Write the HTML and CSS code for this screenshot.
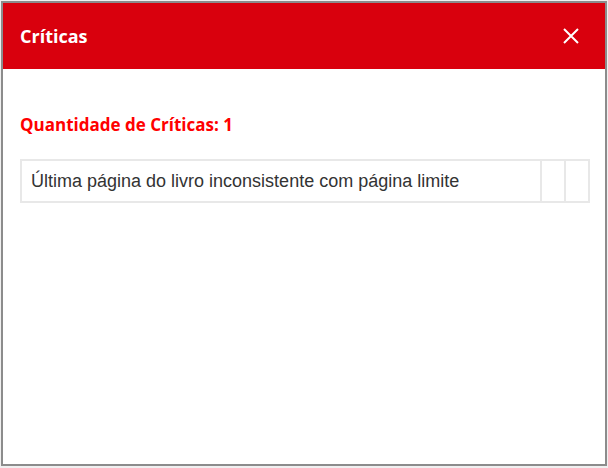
FILE: index.html
```html
<!DOCTYPE html>
<html lang="pt-BR">
<head>
    <meta charset="UTF-8">
    <meta name="viewport" content="width=device-width, initial-scale=1.0">
    <title>Críticas</title>
    <link rel="stylesheet" href="styles.css">
</head>
<body>
    <div class="modal">
        <div class="modal-header">
            <h2>Críticas</h2>
            <button class="close-btn" title="Fechar">
                <svg width="16" height="16" viewBox="0 0 16 16">
                    <path d="M1 1 L15 15 M15 1 L1 15" stroke="#fff" stroke-width="2" fill="none"/>
                </svg>
            </button>
        </div>

        <div class="modal-body">
            <div class="count">Quantidade de Críticas: 1</div>

            <table class="criticas">
                <tr>
                    <td class="msg">Última página do livro inconsistente com página limite</td>
                    <td class="action"></td>
                    <td class="action"></td>
                </tr>
            </table>
        </div>
    </div>
</body>
</html>
```

FILE: styles.css
```css
* {
    margin: 0;
    padding: 0;
    box-sizing: border-box;
}

body {
    background: #f0f0f0;
    padding: 1px;
    font-family: 'Open Sans', 'Segoe UI', sans-serif;
}

.modal {
    width: 606px;
    height: 465px;
    background: white;
    border: 2px solid #8c8c8c;
    display: flex;
    flex-direction: column;
}

.modal-header {
    background: #d9000d;
    height: 66px;
    display: flex;
    align-items: center;
    justify-content: space-between;
    padding: 0 26px 1px 17px;
}

.modal-header h2 {
    color: white;
    font-size: 18px;
    font-weight: 700;
}

.close-btn {
    background: none;
    border: none;
    width: 16px;
    height: 16px;
    display: flex;
    cursor: pointer;
}

.modal-body {
    padding: 44px 15px 0 17px;
}

.count {
    color: #ff0000;
    font-size: 17px;
    font-weight: 700;
    line-height: 24px;
}

.criticas {
    margin-top: 22px;
    width: 100%;
    border-collapse: collapse;
    font-family: 'Liberation Sans', Arial, sans-serif;
}

.criticas td {
    border: 2px solid #e8e8e8;
    height: 42px;
}

.criticas .msg {
    padding: 0 9px;
    font-size: 18px;
    color: #333;
}

.criticas .action {
    width: 24px;
}
```
